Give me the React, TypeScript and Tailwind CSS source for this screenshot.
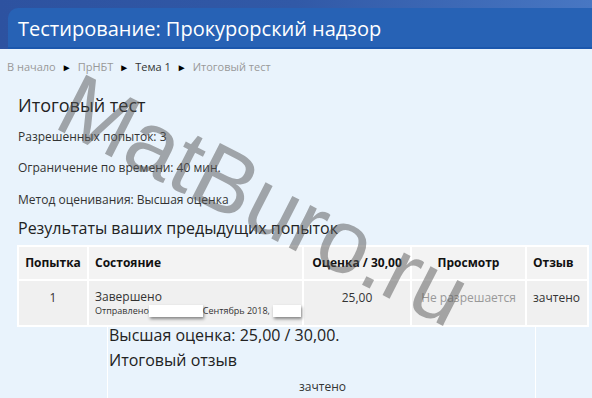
import React from "react";

const font = { fontFamily: '"Open Sans", "Liberation Sans", sans-serif' };

function Sep() {
  return <span className="mx-[6px] text-[10px] leading-none text-black">►</span>;
}

function Redacted({ w }: { w: number }) {
  return (
    <span
      className="inline-block h-[12px] bg-white align-middle shadow-[1px_2px_3px_rgba(0,0,0,0.45)]"
      style={{ width: w }}
    />
  );
}

export default function App() {
  return (
    <div className="relative h-[398px] w-[592px] overflow-hidden bg-[#e9f3fc] text-[#333]" style={font}>
      {/* header */}
      <div className="bg-gradient-to-r from-[#2d52a0] via-[#3159a7] to-[#4877c3] pl-2 pt-2">
        <div className="flex h-[41px] items-center rounded-tl-[10px] border-b-2 border-[#1b57ad] bg-[#2762b5] pl-[10px] pt-[2px]">
          <h1 className="text-[20px] leading-none text-white">Тестирование: Прокурорский надзор</h1>
        </div>
      </div>

      {/* breadcrumb */}
      <div className="mt-[10px] flex items-center pl-[7px] text-[11px] text-[#999]">
        <span>В начало</span>
        <Sep />
        <span>ПрНБТ</span>
        <Sep />
        <span className="text-[#333]">Тема 1</span>
        <Sep />
        <span>Итоговый тест</span>
      </div>

      <div className="pl-[18px] pr-[3px]">
        <h2 className="mt-[18px] text-[18px] leading-[22px] text-[#222]">Итоговый тест</h2>
        <p className="mt-[13px] text-[12px] leading-[16px]">Разрешенных попыток: 3</p>
        <p className="mt-[15px] text-[12px] leading-[16px]">Ограничение по времени: 40 мин.</p>
        <p className="mt-[16px] text-[12px] leading-[16px]">Метод оценивания: Высшая оценка</p>
        <h3 className="mt-[10px] text-[16px] leading-[20px] text-[#222]">Результаты ваших предыдущих попыток</h3>

        <table className="-ml-px mt-[7px] w-[572px] border-collapse text-[12px]">
          <thead>
            <tr className="h-[34px] bg-[#f3f3f3] font-bold text-[#111]">
              <th className="w-[70px] border-2 border-white text-center">Попытка</th>
              <th className="w-[215px] border-2 border-white pl-[6px] text-left">Состояние</th>
              <th className="w-[108px] border-2 border-white text-center">Оценка / 30,00</th>
              <th className="w-[115px] border-2 border-white text-center">Просмотр</th>
              <th className="border-2 border-white pl-[6px] text-left">Отзыв</th>
            </tr>
          </thead>
          <tbody>
            <tr className="h-[46px] bg-[#f0f0f0] align-top">
              <td className="border-2 border-white pt-[8px] text-center">1</td>
              <td className="border-2 border-white pl-[6px] pt-[8px]">
                <div className="leading-[16px]">Завершено</div>
                <div className="flex items-center text-[9px] leading-[12px]">
                  <span>Отправлено</span>
                  <Redacted w={54} />
                  <span>Сентябрь 2018,</span>
                  <span className="ml-[3px]">
                    <Redacted w={28} />
                  </span>
                </div>
              </td>
              <td className="border-2 border-white pt-[8px] text-center">25,00</td>
              <td className="border-2 border-white pt-[8px] text-center text-[#999]">Не разрешается</td>
              <td className="border-2 border-white pl-[6px] pt-[8px]">зачтено</td>
            </tr>
          </tbody>
        </table>

        <div className="ml-[89px] h-[80px] w-[429px] border-x border-white pl-[1px]">
          <div className="-mt-[2px] text-[16px] leading-[20px] text-[#222]">Высшая оценка: 25,00 / 30,00.</div>
          <div className="mt-[5px] text-[16px] leading-[20px] text-[#222]">Итоговый отзыв</div>
          <div className="mt-[8px] pl-[190px] text-[12px]">зачтено</div>
        </div>
      </div>

      {/* watermark */}
      <div
        className="pointer-events-none absolute left-[264px] top-[200px] -translate-x-1/2 -translate-y-1/2 rotate-[27deg] whitespace-nowrap text-[90px] leading-none text-[rgba(85,85,85,0.5)]"
        style={{ fontFamily: '"Liberation Sans", sans-serif' }}
      >
        MatBuro.ru
      </div>
    </div>
  );
}
